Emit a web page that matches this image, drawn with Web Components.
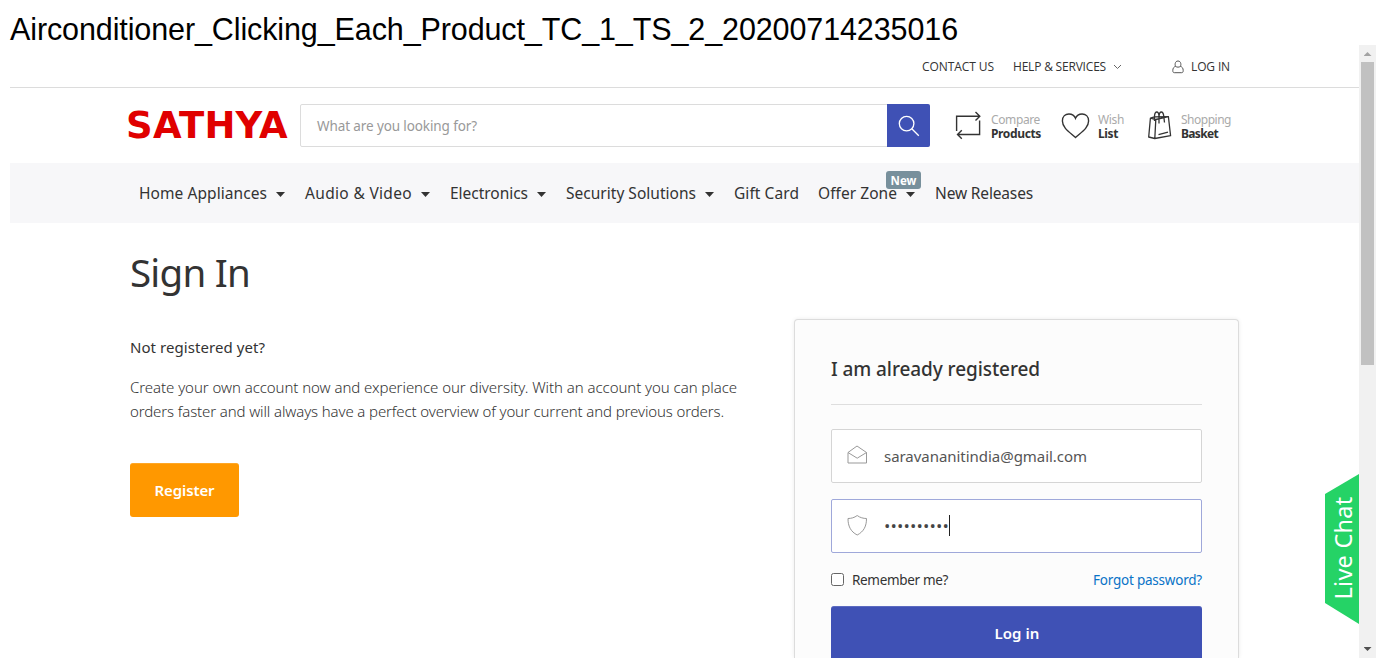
<!DOCTYPE html>
<html lang="en">
<head>
<meta charset="utf-8">
<title>Sathya - Sign In</title>
<style>
html,body{margin:0;background:#fff;overflow:hidden}
body{font-family:"Noto Sans","Open Sans",sans-serif;color:#333}
</style>
</head>
<body>
<test-report></test-report>
<script>
const define = (name, css, html, setup) => customElements.define(name, class extends HTMLElement {
  connectedCallback() {
    if (this.shadowRoot) return;
    const root = this.attachShadow({mode: 'open'});
    root.innerHTML = `<style>*{box-sizing:border-box}${css}</style>${typeof html === 'function' ? html(this) : html}`;
    if (setup) setup(this, root);
  }
});

// A single line of text tracked to the width in its "w" attribute, with 1px side bearings.
define('fit-text', `:host{display:block;white-space:nowrap;flex:none;line-height:20px}span{display:inline-block;margin-left:1px}`, `<span><slot></slot></span>`, (el, root) => {
  const w = parseFloat(el.getAttribute('w'));
  const span = root.querySelector('span');
  const natural = parseFloat(getComputedStyle(span).width);
  span.style.letterSpacing = ((w - 2 - natural) / el.textContent.length) + 'px';
  el.style.width = w + 'px';
});

define('top-bar', `
  :host{display:flex;height:43px;border-bottom:1px solid #dcdcdc;padding:12px 0 0 911px;font-size:12px;color:#333;font-family:"Open Sans",sans-serif}
  fit-text{line-height:19px}
  .help{margin-left:17px}.chev{margin:7px 0 0 6px;width:9px;height:6px}.user{margin:3px 0 0 50px}.login{margin-left:6px}`,
 `<fit-text w="74">CONTACT US</fit-text><fit-text class="help" w="95">HELP &amp; SERVICES</fit-text>
  <svg class="chev" width="9" height="6" viewBox="0 0 9 6" fill="none" stroke="#666"><path d="M1 1l3.5 3.5L8 1"/></svg>
  <svg class="user" width="12" height="14" viewBox="0 0 12 14" fill="none" stroke="#555"><path d="M3.7 6.4C2.7 5.500 2.700 1 6 1s3.300 4.500 2.300 5.400c-1 1-3.600 1-4.600 0C2 6.600.8 8.200.8 10.500c0 1.600.5 2.200 1.500 2.200h7.400c1 0 1.500-.6 1.500-2.200 0-2.300-1.200-3.900-2.900-4.100"/></svg>
  <fit-text class="login" w="41">LOG IN</fit-text>`);

define('search-box', `
  :host{display:flex;width:630px;height:43px;border:1px solid #dcdcdc;border-radius:2px;margin-left:11px}
  fit-text{margin:11px 0 0 15px;font-size:13.5px;color:#999}
  button{margin:-1px -1px -1px auto;width:43px;height:43px;padding:0;border:0;border-radius:0 2px 2px 0;background:#3f51b5;display:flex;align-items:center;justify-content:center}`,
 `<fit-text w="162">What are you looking for?</fit-text><button aria-label="Search"><svg width="22" height="22" viewBox="0 0 22 22" fill="none" stroke="#fff" stroke-width="1.300"><circle cx="8.600" cy="8.600" r="7.300"/><path d="M13.800 13.800l7 7"/></svg></button>`);

define('header-tool', `
  :host{display:flex;height:34px}::slotted(svg){flex:none}
  div{margin-top:9px}fit-text{font-size:12px;line-height:14px}
  .a{color:#aaa}.b{font-weight:700;color:#333}`,
  el => `<slot></slot><div><fit-text class="a" w="${el.dataset.aw}">${el.dataset.a}</fit-text><fit-text class="b" w="${el.dataset.bw}">${el.dataset.b}</fit-text></div>`);

define('shop-header', `
  :host{display:flex;height:75px;padding:16px 0 0 115px}
  .logo{font:bold 37px/43px "DejaVu Sans",sans-serif;color:#e00000}
  svg{display:block}`,
 `<fit-text class="logo" w="164">SATHYA</fit-text><search-box></search-box>
  <header-tool style="margin-left:25px" data-a="Compare" data-aw="51" data-b="Products" data-bw="52">
   <svg width="35" height="36" viewBox="0 0 35 36" fill="none" stroke="#333" stroke-width="1.400"><path d="M1.600 27V12.300h23M20.500 8l4.300 4.300-4.300 4.300M24.600 16.500v14H2.500M6.800 26.200l-4.300 4.300 4.300 4.300"/></svg></header-tool>
  <header-tool style="margin-left:19px" data-a="Wish" data-aw="28" data-b="List" data-bw="22">
   <svg width="36" height="36" viewBox="0 0 36 36" fill="none" stroke="#333" stroke-width="1.400"><path d="M14.500 33.500C9 28.500 1.400 24 1.400 17c0-4.500 3-7 6.500-7 3 0 5.500 1.400 6.600 4.300C15.600 11.400 18.100 10 21.100 10c3.500 0 6.500 2.500 6.500 7 0 7-7.600 11.500-13.100 16.500z"/></svg></header-tool>
  <header-tool style="margin-left:21px" data-a="Shopping" data-aw="52" data-b="Basket" data-bw="39">
   <svg width="34" height="36" viewBox="0 0 34 36" fill="none" stroke="#333" stroke-width="1.300" stroke-linejoin="round"><path d="M4.400 14.200l5.400 1.300-1 19L2.700 33zM4.400 14.200l4-1.400 14-.1 2.200 19-15.800 2.800M9.800 15.500l12.600-2.800M12.500 30.700l9.500-2.500M8.500 17V12c.2-2.500 1-4 2.300-4s2 1.300 2.200 4v4.500M13 19.500V12.500c.2-3 1-4.500 2.300-4.500s2.200 1.500 2.500 4.500l.7 6"/></svg></header-tool>`);

define('nav-item', `
  :host{display:flex;align-items:center;position:relative;height:20px;margin-right:var(--gap,19px)}
  fit-text{font-size:15.500px}
  i{width:9px;height:5px;background:#333;clip-path:polygon(0 0,100% 0,50% 100%);margin:3px 0 0 8px}
  b{position:absolute;right:-6px;top:-12px;width:35px;height:18px;border-radius:3px;background:#78909c;color:#fff;display:flex;justify-content:center}
  b fit-text{font-size:11.500px;line-height:20px}`,
  el => `<fit-text w="${el.dataset.w}">${el.dataset.label}</fit-text>${el.hasAttribute('menu') ? '<i></i>' : ''}${el.dataset.badge ? `<b><fit-text w="28">${el.dataset.badge}</fit-text></b>` : ''}`);

define('nav-bar', `:host{display:flex;height:60px;background:#f7f7f9;padding:20px 0 0 128px}`,
 `<nav-item menu data-label="Home Appliances" data-w="130"></nav-item>
  <nav-item menu data-label="Audio &amp;amp; Video" data-w="109"></nav-item>
  <nav-item menu data-label="Electronics" data-w="80"></nav-item>
  <nav-item menu data-label="Security Solutions" data-w="132"></nav-item>
  <nav-item data-label="Gift Card" data-w="67" style="--gap:17px"></nav-item>
  <nav-item menu data-label="Offer Zone" data-w="81" data-badge="New"></nav-item>
  <nav-item data-label="New Releases" data-w="100"></nav-item>`);

define('register-panel', `
  :host{display:block;width:664px}
  .h{font-size:15px;margin-top:18px}
  .p{font-size:15px;font-weight:300;line-height:24px}
  .p1{margin-top:18px}
  button{display:flex;justify-content:center;align-items:center;margin:40px 0 0 1px;width:109px;height:54px;padding:0 1px 2px 0;border:0;border-top:1px solid #ffa726;border-radius:3px;background:#ff9800;color:#fff;font:600 15px "Noto Sans",sans-serif}`,
 `<fit-text class="h" w="137">Not registered yet?</fit-text>
  <fit-text class="p p1" w="609">Create your own account now and experience our diversity. With an account you can place</fit-text>
  <fit-text class="p" w="596">orders faster and will always have a perfect overview of your current and previous orders.</fit-text>
  <button><fit-text w="62">Register</fit-text></button>`);

define('form-field', `
  :host{display:flex;align-items:center;height:54px;border:1px solid #d5d5d5;border-radius:2px;background:#fff;margin-bottom:16px;padding-left:15px}
  :host([focused]){border-color:#9fa8da}
  .icon{width:37px;height:22px;flex:none}
  fit-text{font-size:15px;color:#555;margin-left:-1px}
  :host([focused]) fit-text{font:17px/20px "Open Sans",sans-serif;color:#444;margin:0 -1px}
  i{width:1px;height:21px;background:#222;margin-top:-1px}`,
  el => `<div class="icon"><slot></slot></div><fit-text w="${el.dataset.w}">${el.dataset.value}</fit-text>${el.hasAttribute('focused') ? '<i></i>' : ''}`);

define('login-card', `
  :host{display:block;width:445px;height:339px;overflow:hidden;border:1px solid #dcdcdc;border-bottom:0;border-radius:4px 4px 0 0;background:#fcfcfc;padding:37px 36px 0;box-shadow:0 0 4px rgba(0,0,0,.08)}
  .h{font-size:19px;font-weight:500;line-height:24px;margin-left:-1px}
  hr{height:1px;border:0;background:#dedede;margin:23px 0 24px}
  .row{display:flex;align-items:center;height:20px;margin-top:16px;font-size:13.500px}
  .row fit-text{line-height:22px}
  .box{width:13px;height:13px;border:1px solid #666;border-radius:2.500px;background:#fff;margin-right:7px}
  .forgot{margin-left:auto;margin-right:-1px;color:#0a73c7}
  .row .forgot,.row fit-text{margin-top:2px}
  button{width:371px;height:54px;margin-top:17px;border:0;border-top:1px solid #5c6bc0;border-radius:3px;background:#3f51b5;color:#fff;font:600 15px "Noto Sans",sans-serif;display:flex;align-items:center;justify-content:center;padding:0 0 2px}
  svg{display:block}`,
 `<fit-text class="h" w="211">I am already registered</fit-text><hr>
  <form-field data-value="saravananitindia@gmail.com" data-w="205"><svg width="21" height="20" viewBox="0 0 21 20" fill="none" stroke="#999" stroke-linejoin="round"><path d="M1 7.500L10 1l9.500 6.500V18H1zM1 7.500l9.200 5.700 9.300-5.700"/></svg></form-field>
  <form-field focused data-value="••••••••••" data-w="67"><svg width="21" height="22" viewBox="0 0 21 22" fill="none" stroke="#999" stroke-linejoin="round"><path d="M10.200 .5C7.500 2.700 4 3.500 1 3.500c0 7.500 2.500 13 9.200 16.500C17 16.500 19.500 11 19.500 3.500c-3 0-6.500-.8-9.300-3z"/></svg></form-field>
  <div class="row"><span class="box" role="checkbox"></span><fit-text w="98">Remember me?</fit-text><fit-text class="forgot" w="111">Forgot password?</fit-text></div>
  <button><fit-text w="47">Log in</fit-text></button>`);

define('sign-in', `
  :host{display:block;padding:27px 0 0 119px}
  .t{font-size:38.500px;line-height:44px}
  div{display:flex;margin-top:25px}
  login-card{margin-left:1px}`,
 `<fit-text class="t" w="122">Sign In</fit-text><div><register-panel></register-panel><login-card></login-card></div>`);

define('scroll-bar', `
  :host{display:flex;flex-direction:column;align-items:center;width:17px;background:#f1f1f1}
  .up{width:8px;height:4px;margin-top:7px;background:#a3a3a3;clip-path:polygon(50% 0,100% 100%,0 100%)}
  .thumb{width:13px;height:303px;background:#c1c1c1;margin-top:6px}
  .down{width:8px;height:4px;margin:auto 0 7px;background:#505050;clip-path:polygon(0 0,100% 0,50% 100%)}`,
 `<span class="up"></span><span class="thumb"></span><span class="down"></span>`);

define('live-chat', `
  :host{position:absolute;right:17px;top:429px;width:34px;height:150px;background:#25d366;clip-path:polygon(100% 0,100% 100%,0 86%,0 13.300%);color:#fff;font-size:23.500px;display:flex;align-items:center;justify-content:center}
  fit-text{transform:rotate(-90deg);line-height:32px;margin-top:-3px}`,
 `<fit-text w="105">Live Chat</fit-text>`);

define('test-report', `
  :host{display:block;width:1386px;height:668px;overflow:hidden;background:#fff}
  .name{font:30.500px/34px "Liberation Sans",Arial,sans-serif;color:#000;padding:12px 0 0 9px;height:45px}
  .view{position:relative;margin-left:10px;width:1366px;height:613px;display:grid;grid-template-columns:1349px 17px;overflow:hidden}
  main{height:613px;overflow:hidden}`,
 `<fit-text class="name" w="950">Airconditioner_Clicking_Each_Product_TC_1_TS_2_20200714235016</fit-text>
  <div class="view"><main><top-bar></top-bar><shop-header></shop-header><nav-bar></nav-bar><sign-in></sign-in></main><scroll-bar></scroll-bar><live-chat></live-chat></div>`);
</script>
</body>
</html>
